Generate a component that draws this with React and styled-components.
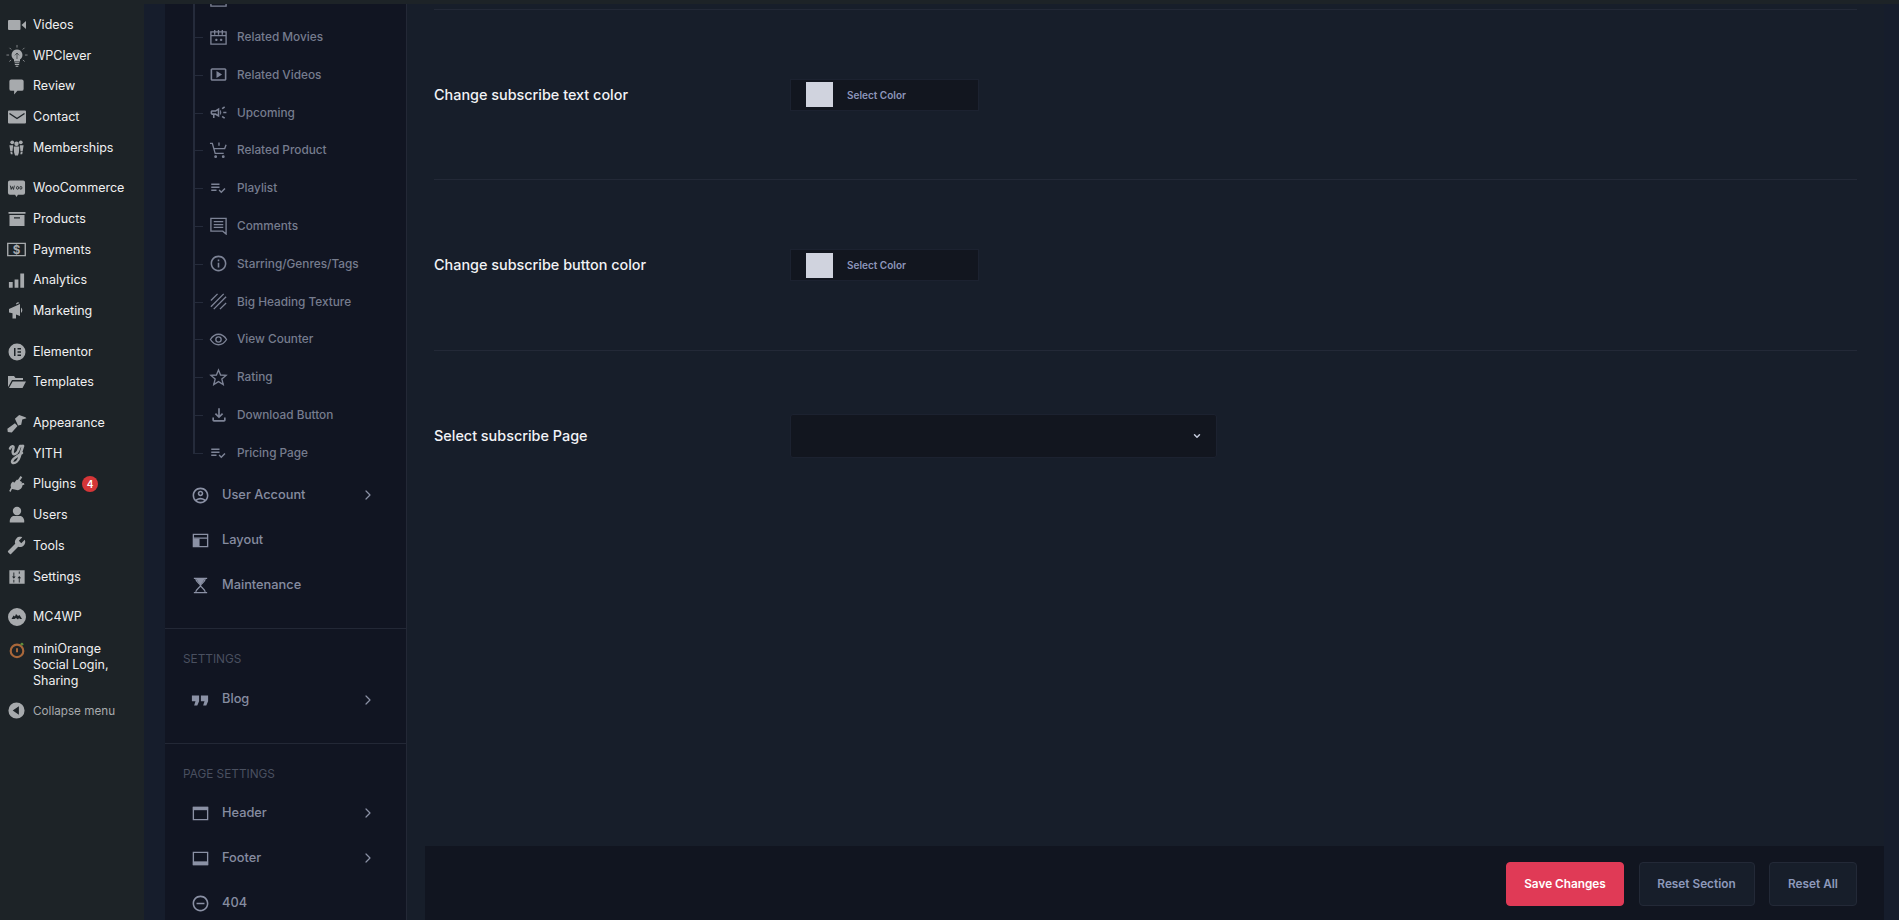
import React from 'react'
import styled, { createGlobalStyle } from 'styled-components'
import {
  MdOutlineSmartDisplay, MdOutlineCampaign, MdOutlinePlaylistAddCheck, MdInfoOutline,
  MdOutlineAccountCircle, MdRemoveCircleOutline, MdOutlineFileDownload,
  MdBuild,
} from 'react-icons/md'
import { ChevronRight, ChevronDown } from 'lucide-react'

const GlobalStyle = createGlobalStyle`
  html, body { margin: 0; padding: 0; background: #171e2a; }
  body { font-family: Inter, "Liberation Sans", sans-serif; overflow: hidden; }
  * { box-sizing: border-box; }
`

const Page = styled.div`
  width: 1899px;
  height: 920px;
  overflow: hidden;
  display: flex;
  flex-direction: column;
`
const TopStrip = styled.div`
  height: 4px;
  flex: none;
  background: #1d2327;
`
const Body = styled.div`
  flex: 1;
  min-height: 0;
  display: flex;
`

/* wp admin menu */
const AdminMenu = styled.nav`
  width: 144px;
  flex: none;
  background: #1d2327;
  padding-top: 5.500px;
`
const AdminItem = styled.div`
  display: flex;
  height: ${(p) => (p.tall ? '63px' : '30.7px')};
  margin-top: ${(p) => (p.gap ? '10px' : '0')};
  padding-top: ${(p) => (p.tall ? '8px' : '0')};
  align-items: ${(p) => (p.tall ? 'flex-start' : 'center')};
  font-size: ${(p) => (p.muted ? '11.7px' : '12.5px')};
  line-height: 16px;
  color: ${(p) => (p.muted ? '#a7aaad' : '#f0f0f1')};
`
const AdminIcon = styled.span`
  width: 33px;
  flex: none;
  display: flex;
  justify-content: center;
  color: #a7aaad;
  & svg { display: block; }
`
const Badge = styled.span`
  width: 16px;
  height: 16px;
  border-radius: 50%;
  background: #d63638;
  color: #fff;
  font-size: 10px;
  font-weight: 600;
  line-height: 16px;
  text-align: center;
  margin-left: 6px;
`

/* options panel nav */
const Gutter = styled.div`
  width: 21px;
  flex: none;
  background: #161d2c;
`
const SideNav = styled.nav`
  width: 242px;
  flex: none;
  overflow: hidden;
  background: #111522;
  border-right: 1px solid #232836;
`
const SubTree = styled.div`
  margin: -23.7px 0 0 28px;
  position: relative;
`
const TreeLine = styled.div`
  position: absolute;
  left: 0;
  top: 0;
  bottom: 18.9px;
  width: 1.500px;
  background: #252b3b;
`
const SubItem = styled.div`
  display: flex;
  align-items: center;
  height: 37.8px;
  position: relative;
  padding-left: 18px;
  font-size: 11.8px;
  font-weight: 500;
  color: #767c8e;
  &::before {
    content: '';
    position: absolute;
    left: 0;
    top: 50%;
    width: 10px;
    height: 1px;
    background: #252b3b;
  }
`
const SubIcon = styled.span`
  width: 28px;
  margin-left: -2px;
  flex: none;
  display: flex;
  color: #7d8396;
  & svg { display: block; }
`
const NavItem = styled.div`
  display: flex;
  align-items: center;
  height: 45px;
  padding-left: 28px;
  font-size: 12.8px;
  font-weight: 500;
  color: #868ca0;
`
const NavIcon = styled.span`
  width: 31px;
  margin-left: -2px;
  flex: none;
  display: flex;
  padding-top: 2px;
  color: #8b91a5;
  & svg { display: block; }
`
const NavLabel = styled.span`
  flex: 1;
`
const NavChevron = styled.span`
  width: 16px;
  margin-right: 30px;
  padding-top: 2px;
  display: flex;
  color: #8b91a5;
`
const NavDivider = styled.div`
  height: 1px;
  margin-top: 21.500px;
  background: #232836;
`
const NavHeading = styled.div`
  font-size: 11.8px;
  color: #4a5060;
  line-height: 14px;
  padding-top: ${(p) => p.top}px;
  padding-bottom: ${(p) => p.bottom}px;
  padding-left: 18px;
`

/* main column */
const Main = styled.main`
  flex: 1;
  min-width: 0;
  display: flex;
  background: #171e2a;
`
const MainInner = styled.div`
  flex: 1;
  min-width: 0;
  display: flex;
  flex-direction: column;
`
const RightGutter = styled.div`
  width: 15px;
  flex: none;
  background: #161d2c;
`
const Options = styled.div`
  flex: 1;
  padding: 5px 27px 0 27px;
`
const Divider = styled.div`
  height: 1px;
  background: #232937;
`
const Row = styled.div`
  display: flex;
  align-items: center;
  height: ${(p) => p.h}px;
`
const Label = styled.div`
  width: 356px;
  flex: none;
  padding-bottom: 1px;
  font-size: 14.400px;
  font-weight: 500;
  color: #f2f3f6;
`
const ColorPicker = styled.div`
  width: 189px;
  height: 32px;
  display: flex;
  align-items: center;
  padding-left: 15px;
  background: #12161f;
  border: 1px solid #1c2230;
`
const Swatch = styled.span`
  width: 27px;
  height: 25px;
  background: #d0d3de;
`
const PickerText = styled.span`
  margin-left: 14px;
  font-size: 10px;
  font-weight: 600;
  color: #8d95bb;
`
const Select = styled.div`
  width: 427px;
  height: 44px;
  display: flex;
  align-items: center;
  justify-content: flex-end;
  padding-right: 14px;
  background: #12161f;
  border: 1px solid #1c2230;
  border-radius: 3px;
  color: #c5cbdc;
`
const Footer = styled.div`
  height: 74px;
  flex: none;
  margin-left: 18px;
  background: #111520;
  display: flex;
  align-items: flex-start;
  justify-content: flex-end;
  gap: 14.500px;
  padding: 16px 27px 0 0;
`
const Button = styled.button`
  height: 44px;
  width: ${(p) => p.w}px;
  padding: 0;
  border-radius: 4px;
  font-family: inherit;
  font-size: 11.8px;
  font-weight: 600;
  background: ${(p) => (p.primary ? '#e03a56' : '#171e2a')};
  color: ${(p) => (p.primary ? '#fff' : '#8d99bb')};
  border: 1px solid ${(p) => (p.primary ? '#e03a56' : '#232937')};
`

const Svg = ({ size = 16, children }) => (
  <svg width={size} height={size} viewBox="0 0 20 20" fill="currentColor">{children}</svg>
)
const Line = ({ size = 19, children }) => (
  <svg width={size} height={size} viewBox="0 0 20 20" fill="none" stroke="currentColor" strokeWidth="1.400">{children}</svg>
)

const adminIcons = {
  video: <Svg size={20}><path d="M2 5h10.500a1 1 0 0 1 1 1v8a1 1 0 0 1-1 1H2a1 1 0 0 1-1-1V6a1 1 0 0 1 1-1zM14.500 10 19 6v8z" /></Svg>,
  bulb: (
    <Svg size={24}>
      <path d="M10 4.500a4.600 4.600 0 0 0-2.500 8.400V14.500h5v-1.600A4.600 4.600 0 0 0 10 4.500zM8 15.200h4v.9H8zM8.200 16.700h3.600v.9H8.200zM8.900 18.200h2.200v.8H8.900z" />
      <path d="M10 .8v2.200M3.800 3.200 5.200 4.600M16.200 3.200 14.800 4.600M1.200 9.200h2.200M16.600 9.200h2.200M3.600 14.600l1.500-1.300M16.400 14.600l-1.500-1.300" stroke="currentColor" strokeWidth=".6" />
      <path d="M8.200 9.500 10 7.500l1.800 2M10 7.500v5" fill="none" stroke="#1d2327" strokeWidth=".5" />
    </Svg>
  ),
  review: <Svg size={19}><path d="M4.500 2.500h11a2 2 0 0 1 2 2v8a2 2 0 0 1-2 2H11l-3.500 4v-4h-3a2 2 0 0 1-2-2v-8a2 2 0 0 1 2-2z" /></Svg>,
  mail: (
    <Svg size={20}>
      <path d="M2 3.500h16a1 1 0 0 1 1 1v11a1 1 0 0 1-1 1H2a1 1 0 0 1-1-1v-11a1 1 0 0 1 1-1z" />
      <path d="M2.500 6.500 10 11.500l7.500-5" fill="none" stroke="#1d2327" strokeWidth="1.400" />
    </Svg>
  ),
  people: (
    <Svg size={19}>
      <circle cx="5.500" cy="4.500" r="2" />
      <circle cx="14.500" cy="4.500" r="2" />
      <circle cx="10" cy="6" r="2.300" />
      <path d="M2.500 7.500h4L5.800 14H3.500zM13.500 7.500h4L16.500 14h-2.300zM7 9h6l-.5 6.500-1 3h-3l-1-3z" />
      <path d="M3.500 14.500h2l.5 2.500H4zM14.500 14.500h2l-.5 2.500h-2z" />
    </Svg>
  ),
  woo: (
    <Svg size={19}>
      <path d="M3 1.500h14a2 2 0 0 1 2 2v11a2 2 0 0 1-2 2h-5.500l-1.500 2.500-1.500-2.500H3a2 2 0 0 1-2-2v-11a2 2 0 0 1 2-2z" />
      <path d="M3.500 7l.9 4 1.200-3 1.200 3 1-4M10 9.300a1.100 1.500 0 1 0 2.200 0 1.100 1.500 0 1 0-2.200 0M13.500 9.300a1.100 1.500 0 1 0 2.200 0 1.100 1.500 0 1 0-2.200 0" fill="none" stroke="#1d2327" strokeWidth=".9" />
    </Svg>
  ),
  box: <Svg size={20}><path d="M1.500 3h17v1.800h-17zM2.500 6h15v11h-15zM7 8.200v1.300h6V8.200z" fillRule="evenodd" /></Svg>,
  pay: (
    <Svg size={21}>
      <path d="M1 3.500h18v13H1zm1.300 1.300v10.400h15.400V4.800z" fillRule="evenodd" />
      <text x="10" y="14.300" textAnchor="middle" fontSize="11" fontWeight="700" fontFamily="Inter, sans-serif">$</text>
    </Svg>
  ),
  bars: <Svg size={19}><path d="M2 11.500h4v6H2zM8 9h4v8.500H8zM14 2.500h4v15h-4z" /></Svg>,
  megaphone: <Svg size={20}><path d="M2 8l11-5v12L9 13.500V17.500H5.500V12.300L2 11.500zM14 6.500a3.500 3.500 0 0 1 0 5.500zM9 3.500a2 2 0 0 1 3.500-1.500z" /></Svg>,
  elementor: (
    <Svg size={20}>
      <path d="M10 1.500a8.500 8.500 0 1 0 0 17 8.500 8.500 0 0 0 0-17zM7 6h1.500v8H7zm3.500 0H14v1.500h-3.500zm0 3.200H14v1.500h-3.500zm0 3.300H14V14h-3.500z" fillRule="evenodd" />
    </Svg>
  ),
  folder: <Svg size={20}><path d="M1 4h6l1.500 2H16v2H5L1.500 14.500H1zM5.700 9.500H19L15.500 16H2z" /></Svg>,
  brush: <Svg size={21}><path d="M8.500 5.500l4-3.500 6 2 1 1-4 1.200-1 5-3 .6zM8.500 9.800l2.500 2.500-5.500 6.200-3.800-.3-.4-3.300z" /></Svg>,
  yith: (
    <svg width="20" height="22" viewBox="0 0 20 22" fill="none" stroke="currentColor" strokeWidth="2.500" strokeLinecap="round" strokeLinejoin="round">
      <path d="M3 5.500C4 2.500 7 2.500 6.500 5 6 7 5 9 6 10.500c1 1.500 3.500.5 5-2.500l2-5h3" />
      <path d="M16 3 12.500 14c-1.200 4-4 6.500-6.500 6-2-.8-.8-3.500 3-6l6-4" />
    </svg>
  ),
  plug: <Svg size={20}><path d="M13.500 2l1.800 1.300-2.500 3.500 2.500 1.500-1.300 1 2.800-.3.700 1.500-2 .7c-.2 2.500-2 4.500-4.500 5L5 15l-1.500 3-1.300-1L4 13.500C3 11 4 8.800 6 7.500l1.200 1.300L10 5.500l.8.500z" /></Svg>,
  user: <Svg size={20}><circle cx="10" cy="6" r="4.200" /><path d="M2.800 17.500c-.5-4 2-6.500 4-6.500h6.400c2 0 4.500 2.500 4 6.500z" /></Svg>,
  wrench: <MdBuild size={19} style={{ transform: 'scaleX(-1)' }} />,
  sliders: (
    <Svg size={18}>
      <path d="M1.500 2.500h17v15h-17zM6 5v4.500H4.500L6.500 12 8.500 9.500H7V5zm7 11v-4.500h1.500L12.500 9l-2 2.500H12V16zM6 13v3h1v-3zm6-9v2.500h1V4z" fillRule="evenodd" />
    </Svg>
  ),
  mc: (
    <Svg size={20}>
      <path d="M10 1a9 9 0 1 0 0 18 9 9 0 0 0 0-18zM4.500 12l2-3.500 1.500 1 1-2.500 2 2 1.500-1 2.500 4h-2l-1-1-1 1.500-2-1.500-1.500 1z" fillRule="evenodd" />
    </Svg>
  ),
  orange: (
    <svg width="18" height="18" viewBox="0 0 20 20" fill="none">
      <circle cx="10" cy="11" r="7" stroke="#a8673a" strokeWidth="2.400" />
      <path d="M10 8v4.500" stroke="#a8673a" strokeWidth="2.200" />
      <circle cx="15.500" cy="3.500" r="1.600" fill="#5d8a3c" />
    </svg>
  ),
  collapse: <Svg size={19}><path d="M10 1.500a8.500 8.500 0 1 0 0 17 8.500 8.500 0 0 0 0-17zM12.500 5.500v9L6 10z" fillRule="evenodd" /></Svg>,
}

const adminMenu = [
  { icon: 'video', label: 'Videos' },
  { icon: 'bulb', label: 'WPClever' },
  { icon: 'review', label: 'Review' },
  { icon: 'mail', label: 'Contact' },
  { icon: 'people', label: 'Memberships' },
  { icon: 'woo', label: 'WooCommerce', gap: true },
  { icon: 'box', label: 'Products' },
  { icon: 'pay', label: 'Payments' },
  { icon: 'bars', label: 'Analytics' },
  { icon: 'megaphone', label: 'Marketing' },
  { icon: 'elementor', label: 'Elementor', gap: true },
  { icon: 'folder', label: 'Templates' },
  { icon: 'brush', label: 'Appearance', gap: true },
  { icon: 'yith', label: 'YITH' },
  { icon: 'plug', label: 'Plugins', badge: 4 },
  { icon: 'user', label: 'Users' },
  { icon: 'wrench', label: 'Tools' },
  { icon: 'sliders', label: 'Settings' },
  { icon: 'mc', label: 'MC4WP', gap: true },
]

const movieIcon = (
  <Line>
    <path d="M2 4h16v13H2zM2 8h16M6 2v5M10 2v5M14 2v5M6.500 12.500h2.500M7.750 11.250v2.500M11.500 12.500H14M12.750 11.250v2.500" />
  </Line>
)
const listIcon = <MdOutlinePlaylistAddCheck size={18} />

// first row is scrolled almost out of the panel, only its icon's foot shows
const subItems = [
  { label: '', icon: movieIcon },
  { label: 'Related Movies', icon: movieIcon },
  { label: 'Related Videos', icon: <MdOutlineSmartDisplay size={19} /> },
  { label: 'Upcoming', icon: <MdOutlineCampaign size={19} /> },
  { label: 'Related Product', icon: <Line><path d="M1 2.500h2.500L6.500 13h9M5 8h11.500l1.500-4M10.500 1.500v3.500" /><circle cx="7" cy="16.500" r=".8" /><circle cx="15" cy="16.500" r=".8" /></Line> },
  { label: 'Playlist', icon: listIcon },
  { label: 'Comments', icon: <Line><path d="M2 2.500h16V19l-3.500-3H2zM5 6h10M5 9h10M5 12h10" /></Line> },
  { label: 'Starring/Genres/Tags', icon: <MdInfoOutline size={19} /> },
  { label: 'Big Heading Texture', icon: <Line><path d="M2 9L9 2M2 15.500 15.500 2M5 18 18 5M11.500 18 18 11.500" /></Line> },
  { label: 'View Counter', icon: <Line><path d="M1.500 10C4 6 7 4.500 10 4.500S16 6 18.500 10C16 14 13 15.500 10 15.500S4 14 1.500 10z" /><circle cx="10" cy="10" r="2.800" /></Line> },
  { label: 'Rating', icon: <Line><path d="M10 2l2.200 5.400 5.800.4-4.500 3.800 1.500 5.800L10 14.300 5 17.400l1.500-5.800L2 7.800l5.800-.4z" /></Line> },
  { label: 'Download Button', icon: <MdOutlineFileDownload size={20} /> },
  { label: 'Pricing Page', icon: listIcon },
]

const Chevron = () => <NavChevron><ChevronRight size={16} strokeWidth={1.8} /></NavChevron>

export default function App() {
  return (
    <Page>
      <GlobalStyle />
      <TopStrip />
      <Body>
        <AdminMenu>
          {adminMenu.map((item) => (
            <AdminItem key={item.label} gap={item.gap}>
              <AdminIcon>{adminIcons[item.icon]}</AdminIcon>
              {item.label}
              {item.badge && <Badge>{item.badge}</Badge>}
            </AdminItem>
          ))}
          <AdminItem tall>
            <AdminIcon>{adminIcons.orange}</AdminIcon>
            <span>miniOrange<br />Social Login,<br />Sharing</span>
          </AdminItem>
          <AdminItem muted>
            <AdminIcon>{adminIcons.collapse}</AdminIcon>
            Collapse menu
          </AdminItem>
        </AdminMenu>
        <Gutter />
        <SideNav>
          <SubTree>
            <TreeLine />
            {subItems.map((item, i) => (
              <SubItem key={i}>
                <SubIcon>{item.icon}</SubIcon>
                {item.label}
              </SubItem>
            ))}
          </SubTree>
          <NavItem><NavIcon><MdOutlineAccountCircle size={19} /></NavIcon><NavLabel>User Account</NavLabel><Chevron /></NavItem>
          <NavItem>
            <NavIcon>
              <Line><path d="M2.500 3.500h15v13h-15zM2.500 7.500h15" /><path d="M3 8h6v8H3z" fill="currentColor" stroke="none" /></Line>
            </NavIcon>
            <NavLabel>Layout</NavLabel>
          </NavItem>
          <NavItem>
            <NavIcon><Line><path d="M3 2.500h14M3 17.500h14M5 2.500c0 4 5 5.500 5 7.500s-5 3.500-5 7.500M15 2.500c0 4-5 5.500-5 7.500s5 3.500 5 7.500" /><path d="M6 3h8c0 2-2 4-4 6-2-2-4-4-4-6z" fill="currentColor" stroke="none" /></Line></NavIcon>
            <NavLabel>Maintenance</NavLabel>
          </NavItem>
          <NavDivider />
          <NavHeading top={22.5} bottom={10.5}>SETTINGS</NavHeading>
          <NavItem>
            <NavIcon><Svg size={18}><path d="M1 5h8v6.500L7 16H3.500L5 11.500H1zM11 5h8v6.500L17 16h-3.500l1.500-4.500h-4z" /></Svg></NavIcon>
            <NavLabel>Blog</NavLabel>
            <Chevron />
          </NavItem>
          <NavDivider />
          <NavHeading top={23.5} bottom={8.5}>PAGE SETTINGS</NavHeading>
          <NavItem>
            <NavIcon><Line><path d="M2.500 3.500h15v13h-15z" /><path d="M2 3h16v3.500H2z" fill="currentColor" stroke="none" /></Line></NavIcon>
            <NavLabel>Header</NavLabel>
            <Chevron />
          </NavItem>
          <NavItem>
            <NavIcon><Line><path d="M2.500 3.500h15v13h-15z" /><path d="M2 13h16v4H2z" fill="currentColor" stroke="none" /></Line></NavIcon>
            <NavLabel>Footer</NavLabel>
            <Chevron />
          </NavItem>
          <NavItem>
            <NavIcon><MdRemoveCircleOutline size={19} /></NavIcon>
            <NavLabel>404</NavLabel>
          </NavItem>
        </SideNav>
        <Main>
          <MainInner>
            <Options>
              <Divider />
              <Row h={169.4}>
                <Label>Change subscribe text color</Label>
                <ColorPicker><Swatch /><PickerText>Select Color</PickerText></ColorPicker>
              </Row>
              <Divider />
              <Row h={169.4}>
                <Label>Change subscribe button color</Label>
                <ColorPicker><Swatch /><PickerText>Select Color</PickerText></ColorPicker>
              </Row>
              <Divider />
              <Row h={170.4}>
                <Label>Select subscribe Page</Label>
                <Select><ChevronDown size={10} strokeWidth={3.500} /></Select>
              </Row>
            </Options>
            <Footer>
              <Button primary w={118}>Save Changes</Button>
              <Button w={116}>Reset Section</Button>
              <Button w={88}>Reset All</Button>
            </Footer>
          </MainInner>
          <RightGutter />
        </Main>
      </Body>
    </Page>
  )
}
